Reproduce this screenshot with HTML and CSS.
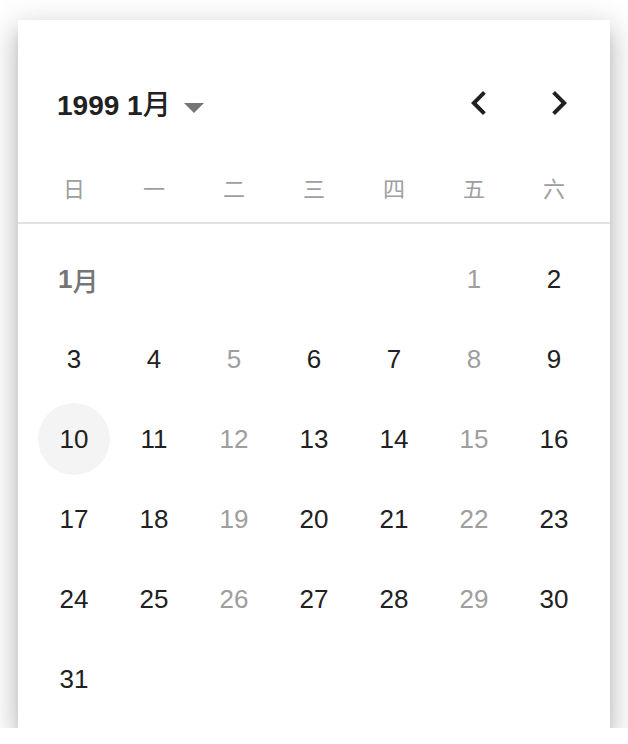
FILE: index.html
```html
<!DOCTYPE html>
<html lang="zh">
<head>
<meta charset="utf-8">
<title>Date picker</title>
<link rel="stylesheet" href="styles.css">
</head>
<body>
<div class="card">
  <div class="header">
    <span class="title">1999 1<span class="cjk">月</span></span>
    <svg class="drop" viewBox="7 10 10 5" width="20" height="10"><path d="M7 10l5 5 5-5z"/></svg>
    <div class="nav">
      <button class="navbtn" aria-label="prev"><svg viewBox="0 0 24 24" width="48" height="48"><path d="M15.41 7.41L14 6l-6 6 6 6 1.41-1.41L10.83 12z"/></svg></button>
      <button class="navbtn" aria-label="next"><svg viewBox="0 0 24 24" width="48" height="48"><path d="M10 6L8.59 7.41 13.17 12l-4.58 4.59L10 18l6-6z"/></svg></button>
    </div>
  </div>
  <div class="weekdays">
    <span>日</span><span>一</span><span>二</span><span>三</span><span>四</span><span>五</span><span>六</span>
  </div>
  <div class="days">
    <div class="month">1<span class="cjk">月</span></div>
    <div class="day off"><span>1</span></div>
    <div class="day"><span>2</span></div>

    <div class="day"><span>3</span></div>
    <div class="day"><span>4</span></div>
    <div class="day off"><span>5</span></div>
    <div class="day"><span>6</span></div>
    <div class="day"><span>7</span></div>
    <div class="day off"><span>8</span></div>
    <div class="day"><span>9</span></div>

    <div class="day sel"><span>10</span></div>
    <div class="day"><span>11</span></div>
    <div class="day off"><span>12</span></div>
    <div class="day"><span>13</span></div>
    <div class="day"><span>14</span></div>
    <div class="day off"><span>15</span></div>
    <div class="day"><span>16</span></div>

    <div class="day"><span>17</span></div>
    <div class="day"><span>18</span></div>
    <div class="day off"><span>19</span></div>
    <div class="day"><span>20</span></div>
    <div class="day"><span>21</span></div>
    <div class="day off"><span>22</span></div>
    <div class="day"><span>23</span></div>

    <div class="day"><span>24</span></div>
    <div class="day"><span>25</span></div>
    <div class="day off"><span>26</span></div>
    <div class="day"><span>27</span></div>
    <div class="day"><span>28</span></div>
    <div class="day off"><span>29</span></div>
    <div class="day"><span>30</span></div>

    <div class="day"><span>31</span></div>
  </div>
</div>
</body>
</html>
```

FILE: styles.css
```css
html, body {
  margin: 0;
  padding: 0;
  background: #ffffff;
}
body {
  font-family: "Liberation Sans", "Noto Sans CJK SC", sans-serif;
  color: #212121;
}
.card {
  box-sizing: border-box;
  margin: 20px 0 0 18px;
  width: 592px;
  height: 708px;
  background: #ffffff;
  box-shadow: 0 8px 10px -5px rgba(0,0,0,0.22), 0 16px 24px 2px rgba(0,0,0,0.14), 0 6px 30px 5px rgba(0,0,0,0.12);
}
.header {
  display: flex;
  align-items: center;
  height: 48px;
  padding: 59px 27px 0 39px;
}
.title {
  font-size: 28px;
  font-weight: 700;
  line-height: 48px;
  color: #212121;
  padding-top: 2px;
}
.cjk {
  font-family: "Noto Sans CJK SC", sans-serif;
  font-weight: 500;
}
.drop {
  margin-left: 13px;
  margin-top: 10px;
  fill: #757575;
}
.nav {
  margin-left: auto;
  display: flex;
  gap: 32px;
}
.navbtn {
  width: 48px;
  height: 48px;
  padding: 0;
  border: 0;
  background: transparent;
  display: flex;
  fill: #212121;
}
.weekdays {
  display: grid;
  grid-template-columns: repeat(7, 80px);
  padding: 0 16px 6px;
  margin-top: 31px;
  height: 58px;
  align-items: center;
  border-bottom: 2px solid #e2e2e2;
  font-family: "Noto Sans CJK SC", sans-serif;
  font-size: 22px;
  color: #9e9e9e;
  text-align: center;
}
.days {
  display: grid;
  grid-template-columns: repeat(7, 80px);
  grid-auto-rows: 80px;
  padding: 15px 16px 0;
}
.month {
  grid-column: span 5;
  display: flex;
  align-items: center;
  padding-left: 24px;
  font-size: 26px;
  font-weight: 700;
  color: #757575;
}
.day {
  display: flex;
  align-items: center;
  justify-content: center;
  font-size: 26px;
  color: #212121;
}
.day span {
  width: 72px;
  height: 72px;
  border-radius: 50%;
  display: flex;
  align-items: center;
  justify-content: center;
}
.day.off {
  color: #9e9e9e;
}
.day.sel span {
  background: #f4f4f4;
}
```
